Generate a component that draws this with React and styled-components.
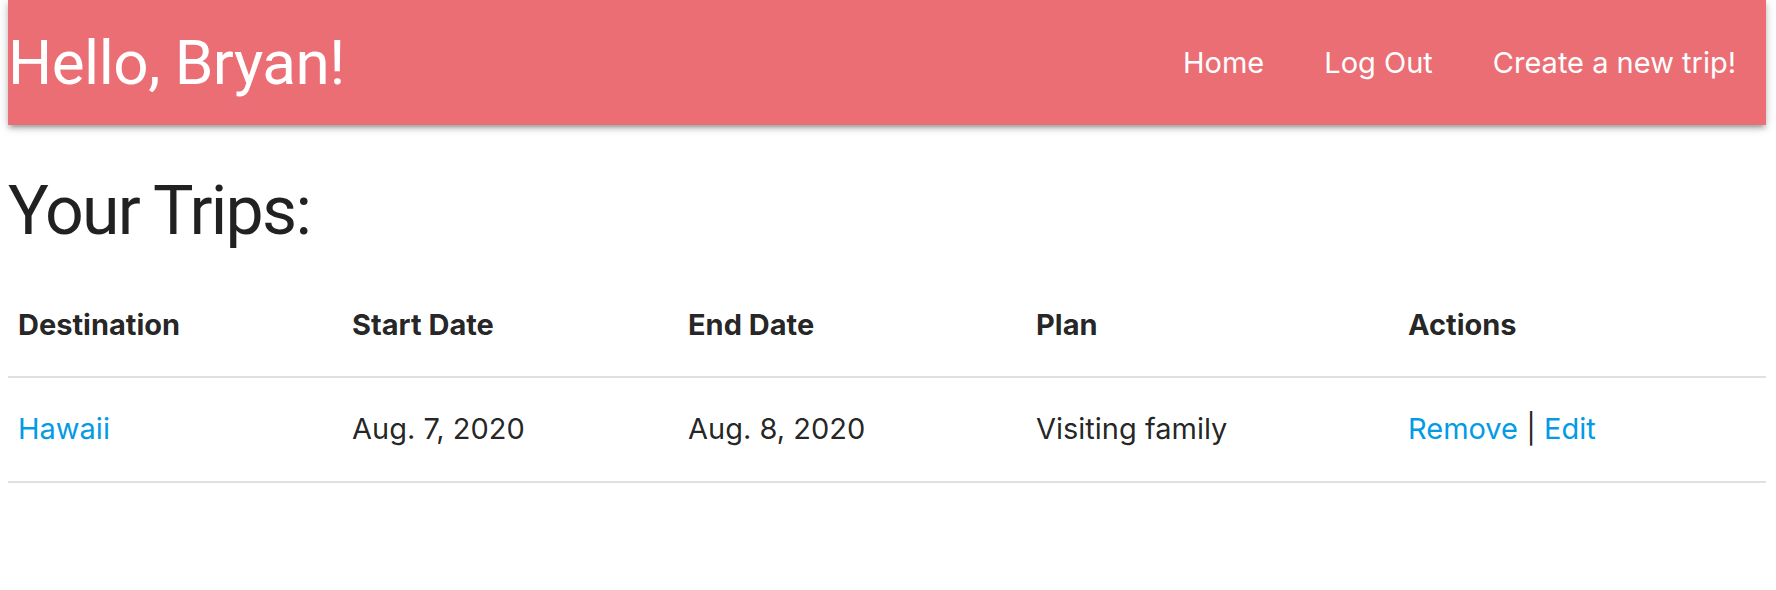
import React from "react";
import styled, { createGlobalStyle } from "styled-components";

const GlobalStyle = createGlobalStyle`
  *, *::before, *::after {
    box-sizing: border-box;
  }
  html, body {
    margin: 0;
    padding: 0;
    background: #ffffff;
  }
  body {
    padding: 0 10px 0 8px;
    font-family: Inter, "Noto Sans", sans-serif;
    color: rgba(0, 0, 0, 0.87);
    font-size: 29px;
    line-height: 1.5;
  }
`;

const Nav = styled.nav`
  height: 125px;
  background: #eb6e75;
  display: flex;
  align-items: center;
  justify-content: space-between;
  box-shadow: 0 4px 4px 0 rgba(0, 0, 0, 0.14), 0 6px 2px -4px rgba(0, 0, 0, 0.12),
    0 2px 10px 0 rgba(0, 0, 0, 0.2);
`;

const Brand = styled.a`
  color: #ffffff;
  font-family: Roboto, Inter, sans-serif;
  font-size: 62px;
  letter-spacing: -0.008em;
  line-height: 125px;
  text-decoration: none;
`;

const NavList = styled.ul`
  display: flex;
  list-style: none;
  margin: 0;
  padding: 0;
`;

const NavLink = styled.a`
  display: block;
  padding: 0 30px;
  color: #ffffff;
  font-size: 29px;
  line-height: 125px;
  text-decoration: none;
`;

const Heading = styled.h3`
  margin: 49px 0 25px;
  font-family: Roboto, Inter, sans-serif;
  font-size: 68px;
  font-weight: 400;
  line-height: 110%;
  letter-spacing: -0.025em;
  color: rgba(0, 0, 0, 0.87);
`;

const Table = styled.table`
  width: 100%;
  border-collapse: collapse;
  table-layout: fixed;
`;

const Row = styled.tr`
  border-bottom: 2px solid rgba(0, 0, 0, 0.12);
`;

const Th = styled.th`
  width: ${(p) => p.$w}px;
  padding: 30px 10px;
  text-align: left;
  font-weight: 700;
  font-size: 29px;
  line-height: 42.5px;
`;

const Td = styled.td`
  padding: 30px 10px;
  text-align: left;
  font-size: 29px;
  line-height: 42.5px;
`;

const Link = styled.a`
  color: #039be5;
  text-decoration: none;
`;

const columns = [
  { label: "Destination", w: 334 },
  { label: "Start Date", w: 336 },
  { label: "End Date", w: 348 },
  { label: "Plan", w: 372 },
  { label: "Actions", w: 368 },
];

export default function App() {
  return (
    <>
      <GlobalStyle />
      <Nav>
        <Brand href="#">Hello, Bryan!</Brand>
        <NavList>
          <li><NavLink href="#">Home</NavLink></li>
          <li><NavLink href="#">Log Out</NavLink></li>
          <li><NavLink href="#">Create a new trip!</NavLink></li>
        </NavList>
      </Nav>
      <Heading>Your Trips:</Heading>
      <Table>
        <thead>
          <Row>
            {columns.map((c) => (
              <Th key={c.label} $w={c.w}>{c.label}</Th>
            ))}
          </Row>
        </thead>
        <tbody>
          <Row>
            <Td><Link href="#">Hawaii</Link></Td>
            <Td>Aug. 7, 2020</Td>
            <Td>Aug. 8, 2020</Td>
            <Td>Visiting family</Td>
            <Td>
              <Link href="#">Remove</Link> | <Link href="#">Edit</Link>
            </Td>
          </Row>
        </tbody>
      </Table>
    </>
  );
}
